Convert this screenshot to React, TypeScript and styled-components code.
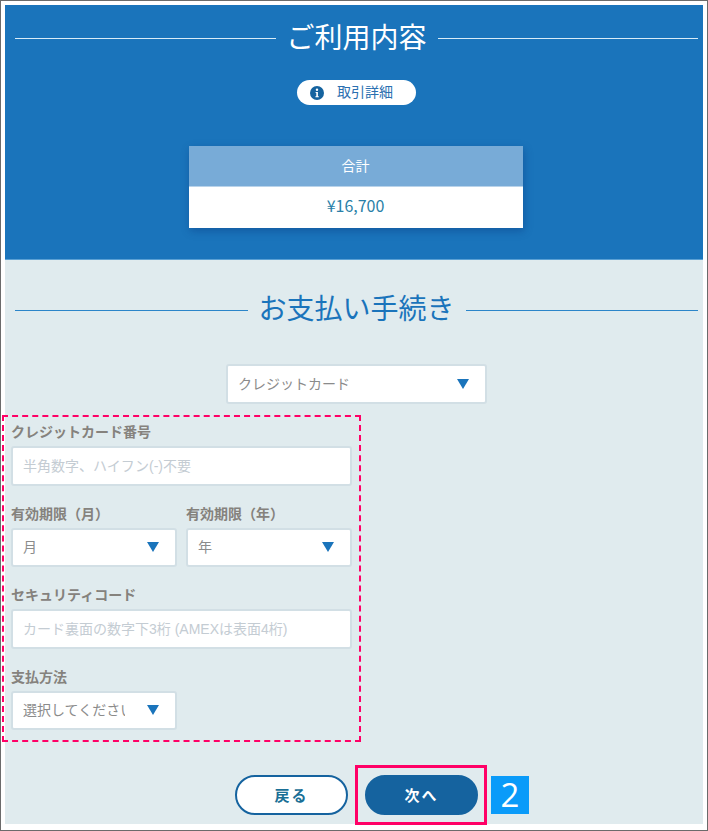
import React from "react";
import styled, { createGlobalStyle } from "styled-components";

const Global = createGlobalStyle`
  html, body { margin: 0; padding: 0; background: #fff; }
  body { font-family: "Noto Sans CJK JP", "Noto Sans", sans-serif; }
  * { box-sizing: border-box; }
`;

const Frame = styled.div`
  width: 708px;
  height: 831px;
  border: 1px solid #6b6b6b;
  padding: 4px 4px 0;
  background: #fff;
`;

const Summary = styled.section`
  height: 254px;
  background: #1a74bb;
  padding: 0 5px 0 10px;
  display: flex;
  flex-direction: column;
  align-items: center;
`;

const Payment = styled.section`
  height: 565px;
  background: #e0ebee;
  border-top: 1px solid #5aa0d4;
  display: flex;
  flex-direction: column;
`;

const Heading = styled.h2<{ $light?: boolean }>`
  margin: 0;
  width: 100%;
  height: 62px;
  display: flex;
  align-items: center;
  gap: 11px;
  font-size: 28px;
  font-weight: 400;
  line-height: 40px;
  white-space: nowrap;
  color: ${(p) => (p.$light ? "#ffffff" : "#1a74bb")};
  &::before,
  &::after {
    content: "";
    flex: 1;
    height: 1px;
    margin-top: ${(p) => (p.$light ? 4 : 6)}px;
    background: ${(p) => (p.$light ? "#d8ecf8" : "#2b85c9")};
  }
`;

const DetailPill = styled.button`
  margin-top: 13px;
  width: 119px;
  height: 25px;
  border: 0;
  border-radius: 13px;
  background: #fff;
  color: #2a6fb0;
  font: 400 14px/25px "Noto Sans CJK JP", sans-serif;
  display: flex;
  align-items: center;
  padding: 0 0 2px 13px;
  gap: 13px;
`;

const TotalCard = styled.div`
  margin: 41px 2px 0 0;
  width: 334px;
  box-shadow: 1px 3px 8px rgba(10, 60, 130, 0.45);
`;

const TotalHead = styled.div`
  height: 41px;
  background: #78abd7;
  color: #fff;
  font-size: 14px;
  display: flex;
  align-items: center;
  justify-content: center;
  padding-bottom: 3px;
  border-bottom: 1px solid #b9d3ea;
`;

const TotalValue = styled.div`
  height: 41px;
  background: #fff;
  color: #2a7fa8;
  font-size: 16px;
  display: flex;
  align-items: center;
  justify-content: center;
  padding-bottom: 6px;
`;

const PaymentHead = styled.div`
  padding: 16px 5px 0 10px;
`;

const MethodRow = styled.div`
  margin-top: 26px;
  display: flex;
  justify-content: center;
  padding-left: 5px;
`;

const FieldBox = styled.div<{ $w: number }>`
  width: ${(p) => p.$w}px;
  height: 39.5px;
  background: #fff;
  border: 2px solid #d2dfe5;
  border-radius: 3px;
  display: flex;
  align-items: center;
  justify-content: space-between;
  padding: 0 16px 2px 10px;
  font-size: 14px;
  color: #8b8b8b;
  overflow: hidden;
  white-space: nowrap;
`;

const Placeholder = styled.span`
  color: #c4ccd3;
  font-size: 14px;
  font-family: "Liberation Sans", "Noto Sans CJK JP", sans-serif;
`;

const Clip = styled.span`
  width: 102px;
  overflow: hidden;
`;

const Arrow = styled.span`
  flex: none;
  margin-top: 2px;
  width: 0;
  height: 0;
  border-left: 6.5px solid transparent;
  border-right: 6.5px solid transparent;
  border-top: 10px solid #1a74bb;
`;

const Dashed = styled.div`
  margin: 11.5px 0 0 -3px;
  width: 359px;
  height: 327px;
  border: 2px dashed #ff0066;
  padding: 4px 6px 0 7px;
`;

const Label = styled.div`
  height: 20px;
  font-size: 14px;
  line-height: 20px;
  font-weight: 700;
  color: #85827d;
  white-space: nowrap;
`;

const Group = styled.div`
  margin-bottom: 17px;
  > div:first-child {
    margin-bottom: 5px;
  }
`;

const Pair = styled.div`
  display: flex;
  gap: 9px;
`;

const Actions = styled.div`
  margin-top: 23px;
  padding-left: 230px;
  display: flex;
  align-items: center;
`;

const PillButton = styled.button<{ $primary?: boolean }>`
  width: 113px;
  height: 40px;
  border-radius: 20px;
  border: 2px solid #15639f;
  background: ${(p) => (p.$primary ? "#15639f" : "#fff")};
  color: ${(p) => (p.$primary ? "#fff" : "#1a6f96")};
  font: 700 15px "Noto Sans CJK JP", sans-serif;
  letter-spacing: 2px;
  padding: 0 0 2px;
`;

const Highlight = styled.div`
  margin-left: 7px;
  width: 132px;
  height: 60px;
  border: 3px solid #ff0066;
  padding-left: 7px;
  display: flex;
  align-items: center;
`;

const StepBadge = styled.div`
  margin-left: 4px;
  width: 38px;
  height: 38px;
  background: #0a9bf9;
  color: #fff;
  font: 400 33px/38px "Open Sans", sans-serif;
  text-align: center;
`;

const InfoIcon = () => (
  <svg width="14" height="14" viewBox="0 0 14 14" aria-hidden="true" style={{ marginTop: 2 }}>
    <circle cx="7" cy="7" r="7" fill="#15639f" />
    <circle cx="7" cy="3.8" r="1.2" fill="#fff" />
    <path d="M5.6 6h2.3v4.2h.9v1H5.4v-1h.9V7h-.7z" fill="#fff" />
  </svg>
);

export default function App() {
  return (
    <>
      <Global />
      <Frame>
        <Summary>
          <Heading $light>ご利用内容</Heading>
          <DetailPill>
            <InfoIcon />
            取引詳細
          </DetailPill>
          <TotalCard>
            <TotalHead>合計</TotalHead>
            <TotalValue>¥16,700</TotalValue>
          </TotalCard>
        </Summary>
        <Payment>
          <PaymentHead>
            <Heading>お支払い手続き</Heading>
          </PaymentHead>
          <MethodRow>
            <FieldBox $w={261}>
              クレジットカード
              <Arrow />
            </FieldBox>
          </MethodRow>
          <Dashed>
            <Group>
              <Label>クレジットカード番号</Label>
              <FieldBox $w={341}>
                <Placeholder>半角数字、ハイフン(-)不要</Placeholder>
              </FieldBox>
            </Group>
            <Pair>
              <Group>
                <Label>有効期限（月）</Label>
                <FieldBox $w={166}>
                  月
                  <Arrow />
                </FieldBox>
              </Group>
              <Group>
                <Label>有効期限（年）</Label>
                <FieldBox $w={166}>
                  年
                  <Arrow />
                </FieldBox>
              </Group>
            </Pair>
            <Group>
              <Label>セキュリティコード</Label>
              <FieldBox $w={341}>
                <Placeholder>カード裏面の数字下3桁 (AMEXは表面4桁)</Placeholder>
              </FieldBox>
            </Group>
            <Group>
              <Label>支払方法</Label>
              <FieldBox $w={166}>
                <Clip>選択してください</Clip>
                <Arrow />
              </FieldBox>
            </Group>
          </Dashed>
          <Actions>
            <PillButton>戻る</PillButton>
            <Highlight>
              <PillButton $primary>次へ</PillButton>
            </Highlight>
            <StepBadge>2</StepBadge>
          </Actions>
        </Payment>
      </Frame>
    </>
  );
}
